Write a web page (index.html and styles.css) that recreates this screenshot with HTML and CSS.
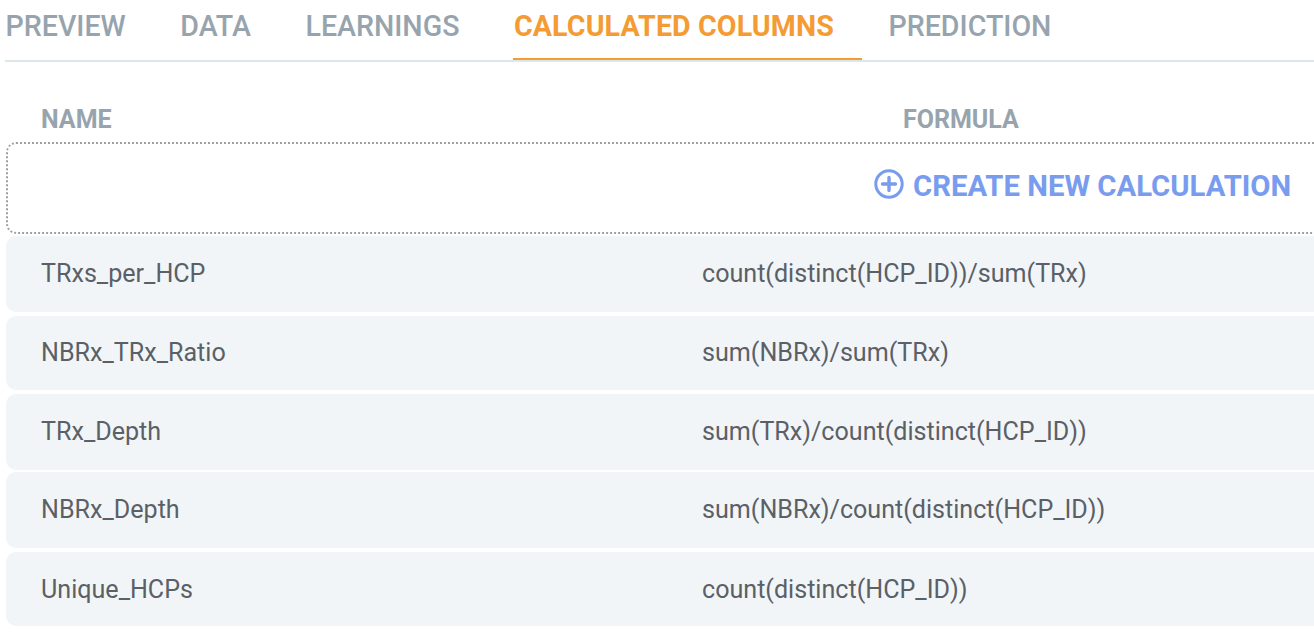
FILE: index.html
```html
<!DOCTYPE html>
<html lang="en">
<head>
<meta charset="utf-8">
<title>Calculated Columns</title>
<link rel="stylesheet" href="styles.css">
</head>
<body>
<div class="page">
  <nav class="tabs">
    <a class="tab">PREVIEW</a>
    <a class="tab">DATA</a>
    <a class="tab">LEARNINGS</a>
    <a class="tab active">CALCULATED COLUMNS</a>
    <a class="tab">PREDICTION</a>
  </nav>
  <div class="head">
    <span class="head-name">NAME</span>
    <span class="head-formula">FORMULA</span>
  </div>
  <div class="create">
    <button class="create-btn">
      <svg class="plus" viewBox="0 0 30 30" width="30" height="30" aria-hidden="true">
        <circle cx="15" cy="15" r="13.2" fill="none" stroke="#7a9cee" stroke-width="3"/>
        <path d="M15 8.5v13M8.5 15h13" fill="none" stroke="#7a9cee" stroke-width="3.4" stroke-linecap="round"/>
      </svg>
      <span>CREATE NEW CALCULATION</span>
    </button>
  </div>
  <div class="rows">
    <div class="row h76"><span class="name">TRxs_per_HCP</span><span class="formula">count(distinct(HCP_ID))/sum(TRx)</span></div>
    <div class="row h74"><span class="name">NBRx_TRx_Ratio</span><span class="formula">sum(NBRx)/sum(TRx)</span></div>
    <div class="row h76"><span class="name">TRx_Depth</span><span class="formula">sum(TRx)/count(distinct(HCP_ID))</span></div>
    <div class="row h76 tight"><span class="name">NBRx_Depth</span><span class="formula">sum(NBRx)/count(distinct(HCP_ID))</span></div>
    <div class="row h74"><span class="name">Unique_HCPs</span><span class="formula">count(distinct(HCP_ID))</span></div>
  </div>
</div>
</body>
</html>
```
FILE: styles.css
```css
* { box-sizing: border-box; }
html, body { margin: 0; padding: 0; background: #fff; overflow: hidden; }
body { width: 1314px; height: 638px; font-family: Roboto, "Liberation Sans", sans-serif; }
.page { width: 1340px; padding-left: 5px; }

.tabs { display: flex; height: 62px; border-bottom: 2px solid #dfe6ea; }
.tab {
  height: 60px; margin-right: 26px; padding: 8px 28px 0 .5px;
  font-size: 28.6px; line-height: 36px; font-weight: 500; color: #97a4ae; white-space: nowrap;
}
.tab.active { color: #f59b33; font-weight: 700; letter-spacing: .12px; border-bottom: 2px solid #f59b33; margin-bottom: -2px; }

.head { height: 80px; display: flex; padding: 43px 0 0 36px; font-size: 25px; line-height: 30px; font-weight: 700; color: #97a4ae; }
.head-name { width: 862px; }

.create {
  margin-left: 1px; height: 92px; border: 2px dotted #a0a0a0; border-radius: 10px;
  display: flex; align-items: center; padding: 0 0 4px 866px;
}
.create-btn { display: flex; align-items: center; gap: 9px; padding: 0; border: 0; background: none; font: 700 29.3px/36px Roboto, sans-serif; color: #7a9cee; white-space: nowrap; }
.plus { flex: none; margin-top: -4px; }

.rows { margin-left: 1px; margin-top: 2px; display: flex; flex-direction: column; gap: 4px; }
.row { display: flex; align-items: center; padding: 0 0 2px 35px; background: #f1f5f8; border-radius: 10px; font-size: 25.1px; color: #5a6066; }
.row:last-child { padding-bottom: 0; }
.h76 { height: 76px; }
.h74 { height: 74px; }
.tight { margin-top: -2px; }
.name { width: 661px; }
```
